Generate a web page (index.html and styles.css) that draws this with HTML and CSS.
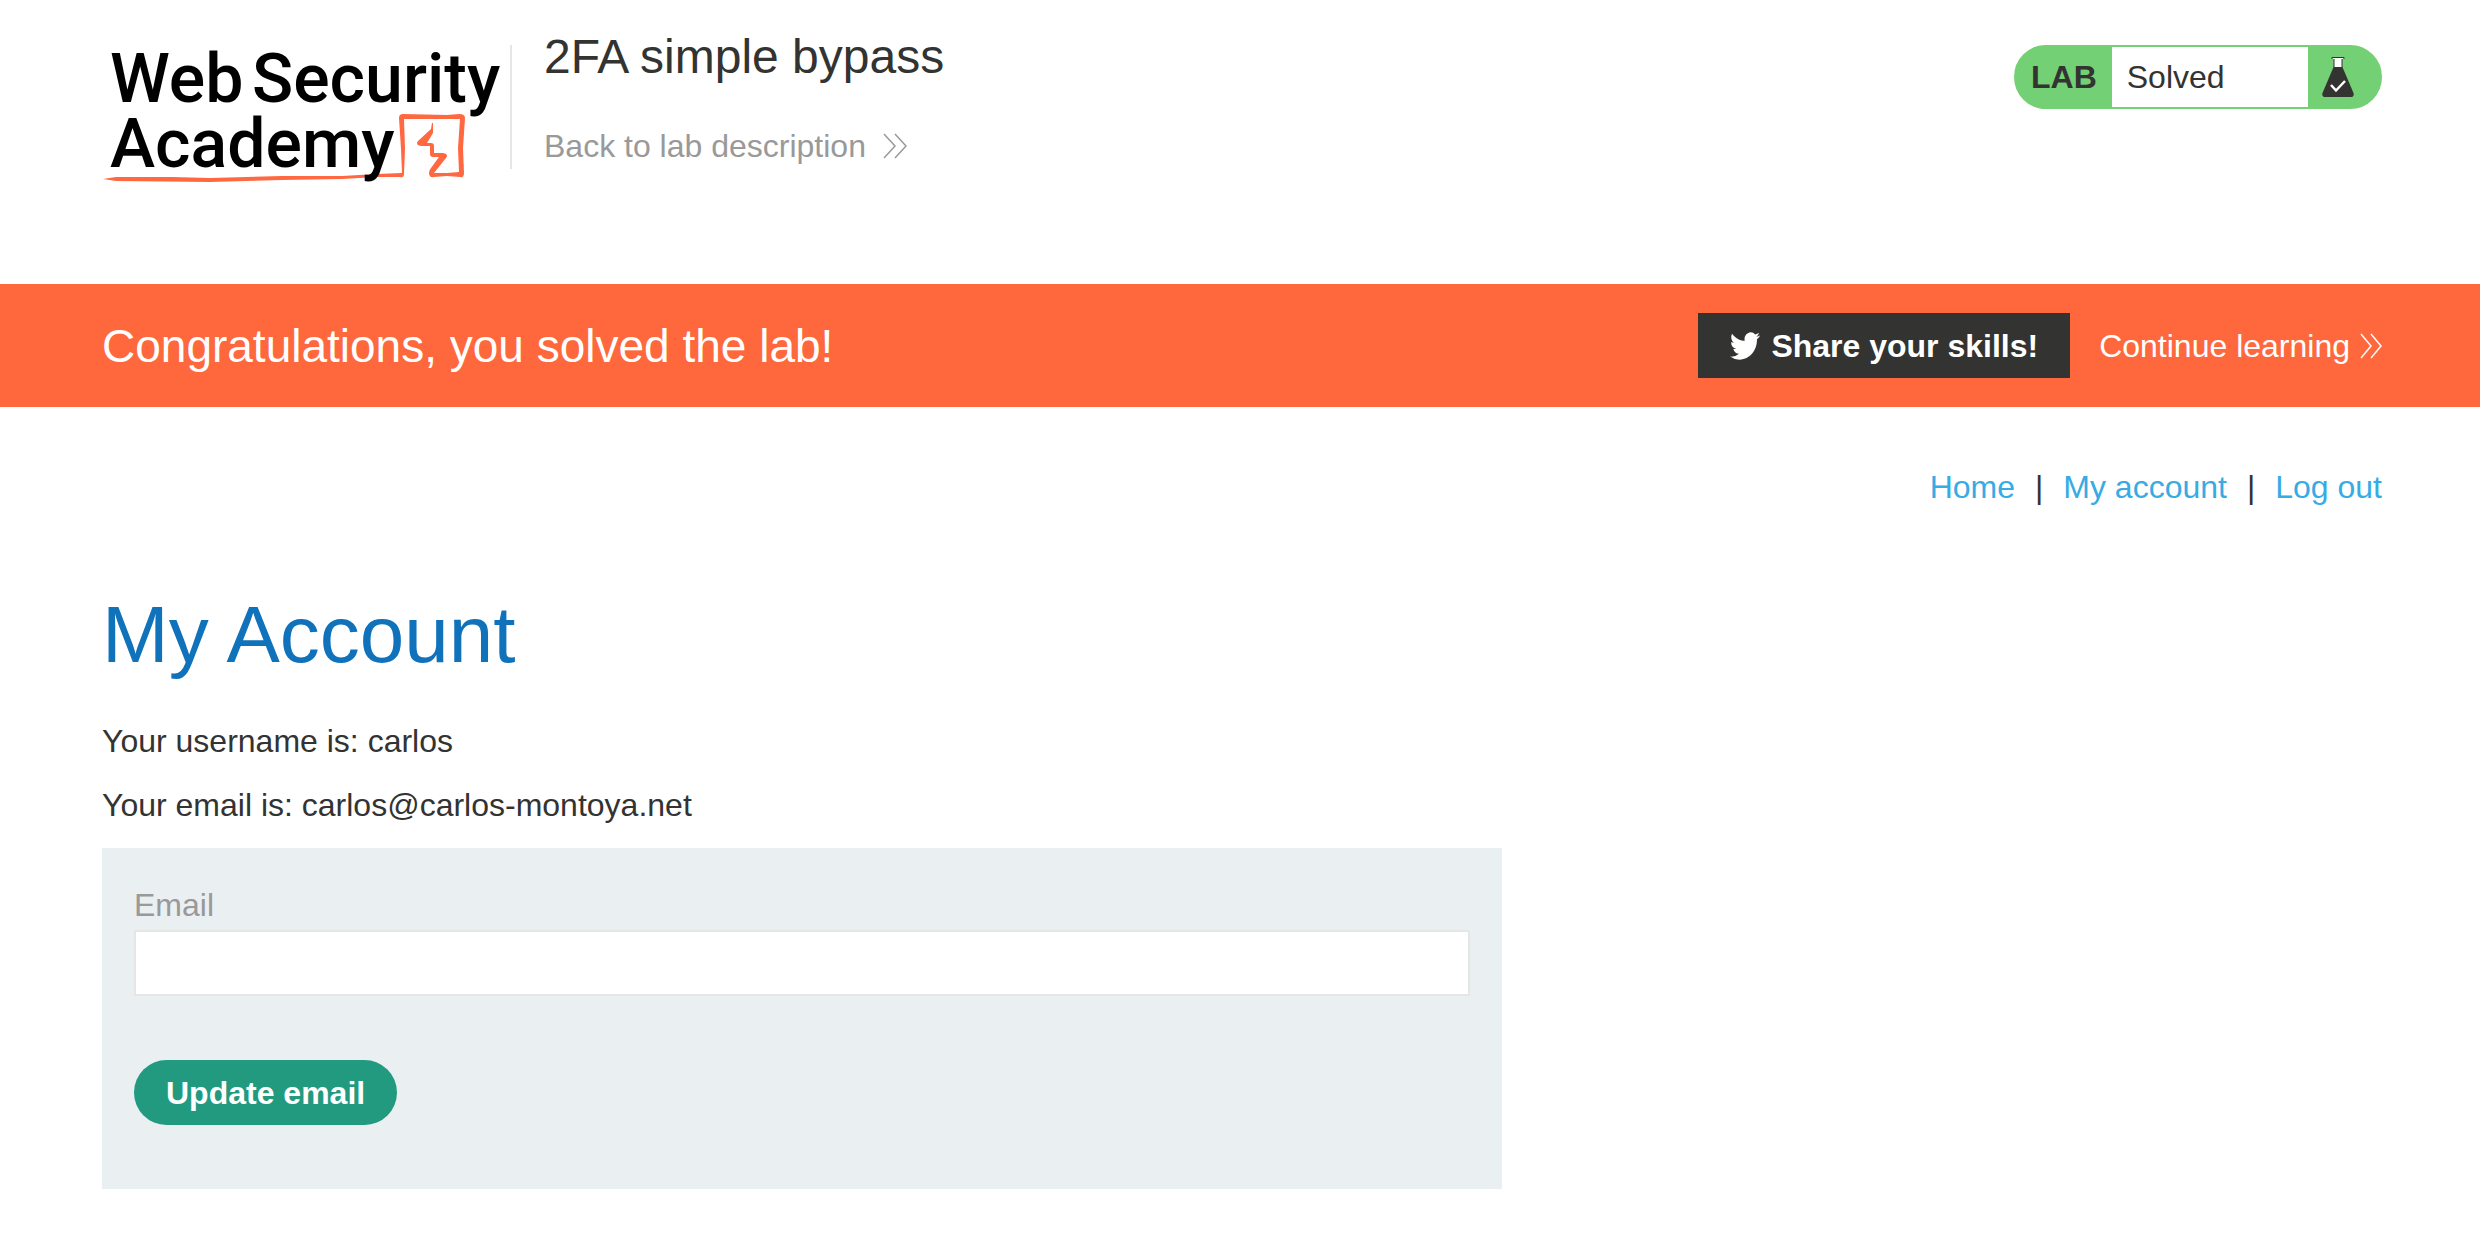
FILE: index.html
```html
<!DOCTYPE html>
<html lang="en">
<head>
<meta charset="utf-8">
<meta name="viewport" content="width=device-width, initial-scale=1">
<title>2FA simple bypass</title>
<link rel="stylesheet" href="styles.css">
</head>
<body>
<header class="lab-header container">
  <a class="logo" href="#" aria-label="Web Security Academy">
    <svg width="400" height="144" viewBox="0 0 400 144">
      <path d="M1 134 L14 132 L70 132 L108 133 L180 131 L240 131 L275 129 L300 128 L299 104 L297 73 Q297 69 301 69 L345 70 L357 69 Q363 69 363 73 L361 103 L362 128 Q362 133 358 132 L345 131 L332 132 Q327 133 327 128 Q327 125 329 123 L337 112 L331 112 Q328 112 328 109 L328 101 L319 101 Q313 100 316 96 L329 84 L330 78 L331 78 L331 88 L325 98 L329 98 Q332 98 332 101 L332 108 L341 108 Q347 109 344 113 L332 128 L345 128 L357 127 L356 103 L358 74 L345 74 L302 74 L303 104 L302 129 Q302 133 298 132 L275 132 L240 134 L180 135 L108 137 L14 136 Z" fill="#ff6840"/>
      <g class="logo-text">
        <text x="8" y="57">Web</text>
        <text x="150" y="57">Security</text>
        <text x="8" y="122">Academy</text>
      </g>
    </svg>
  </a>
  <div class="title">
    <h2>2FA simple bypass</h2>
    <a class="back-link" href="#">Back to lab description
      <svg width="24" height="26" viewBox="0 0 24 26"><path d="M1 1 L12 13 L1 25 M12 1 L23 13 L12 25"/></svg>
    </a>
  </div>
  <div class="status">
    <span class="status-label">LAB</span>
    <span class="status-value">Solved</span>
    <svg class="flask" width="32" height="42" viewBox="0 0 32 42">
      <path d="M12 10 H20 L31.500 37 Q32.500 41 28.500 41 H3.500 Q-.5 41 .5 37 Z" fill="#333332"/>
      <path d="M10.500 1.500 H21.500 V3 H20 V11 H12 V3 H10.500 Z" fill="#fff"/>
      <path d="M10 3 V1.500 H22 V3 M20 3 V11 M12 3 V11" fill="none" stroke="#333332"/>
      <path d="M9 29 L14 34.500 L23 25" fill="none" stroke="#fff" stroke-width="2.500"/>
    </svg>
  </div>
</header>

<section class="banner">
  <div class="container banner-row">
    <p class="congrats">Congratulations, you solved the lab!</p>
    <button class="share" type="button">
      <svg width="30" height="28" viewBox="0 2 24 20" preserveAspectRatio="none"><path fill="#fff" d="M23.954 4.569a10 10 0 0 1-2.825.775 4.958 4.958 0 0 0 2.163-2.723 9.990 9.990 0 0 1-3.127 1.184 4.920 4.920 0 0 0-8.384 4.482C7.691 8.094 4.066 6.130 1.640 3.161a4.822 4.822 0 0 0-.666 2.475c0 1.710.870 3.213 2.188 4.096a4.904 4.904 0 0 1-2.228-.616v.061a4.923 4.923 0 0 0 3.946 4.827 4.996 4.996 0 0 1-2.212.085 4.937 4.937 0 0 0 4.604 3.417 9.868 9.868 0 0 1-6.102 2.105c-.390 0-.779-.023-1.170-.067a13.995 13.995 0 0 0 7.557 2.209c9.054 0 13.999-7.496 13.999-13.986 0-.209 0-.420-.015-.630a9.936 9.936 0 0 0 2.460-2.548z"/></svg>
      Share your skills!
    </button>
    <a class="continue" href="#">Continue learning
      <svg width="22" height="26" viewBox="0 0 22 26"><path d="M1 1 L11 13 L1 25 M11 1 L21 13 L11 25"/></svg>
    </a>
  </div>
</section>

<main class="container">
  <nav class="nav">
    <a href="#">Home</a><span>|</span><a href="#">My account</a><span>|</span><a href="#">Log out</a>
  </nav>
  <h1>My Account</h1>
  <div class="details">
    <p>Your username is: carlos</p>
    <p>Your email is: carlos@carlos-montoya.net</p>
  </div>
  <form class="email-form">
    <label for="email">Email</label>
    <input id="email" type="email" name="email">
    <button class="update" type="submit">Update email</button>
  </form>
</main>
</body>
</html>
```
FILE: styles.css
```css
* {
  box-sizing: border-box;
}

body {
  margin: 0;
  background: #fff;
  color: #333332;
  font: 32px/48px "Liberation Sans", Arial, sans-serif;
}

h1,
h2,
p {
  margin: 0;
  font-weight: normal;
}

a {
  color: inherit;
  text-decoration: none;
}

button,
input {
  font: inherit;
}

svg {
  display: block;
  flex: none;
}

.container {
  padding: 0 98px 0 102px;
}

.lab-header {
  display: flex;
  align-items: flex-start;
  padding-top: 28px;
  padding-bottom: 95px;
}

.logo {
  margin: 17px 8px 0 0;
}

.logo-text {
  fill: #000;
  font-family: Roboto, sans-serif;
  font-size: 68px;
  font-weight: 500;
}

.title {
  flex: 1;
  position: relative;
  padding-left: 34px;
}

.title::before {
  content: "";
  position: absolute;
  left: 0;
  top: 17px;
  width: 2px;
  height: 124px;
  background: #e6e6e6;
}

.title h2 {
  margin-bottom: 36px;
  font-size: 48px;
  line-height: 58px;
}

.back-link,
.continue {
  display: inline-flex;
  align-items: center;
}

.back-link {
  gap: 17px;
  color: #999;
}

.back-link path,
.continue path {
  fill: none;
  stroke: currentColor;
  stroke-width: 1.5;
}

.status {
  display: flex;
  align-items: center;
  width: 368px;
  height: 64px;
  margin-top: 17px;
  border: 2px solid #74d074;
  border-radius: 32px;
  background: #74d074;
  line-height: 60px;
}

.status-label {
  padding: 0 15px;
  font-weight: bold;
}

.status-value {
  flex: 1;
  padding-left: 15px;
  background: #fff;
}

.flask {
  margin: 0 26px 0 14px;
}

.banner {
  padding: 29px 0;
  background: #ff683d;
  color: #fff;
}

.banner-row {
  display: flex;
  align-items: center;
}

.congrats {
  flex: 1;
  font-size: 46px;
}

.share {
  display: flex;
  align-items: center;
  gap: 11px;
  height: 65px;
  margin-right: 29px;
  padding: 0 32px;
  border: 0;
  background: #333332;
  color: #fff;
  font-weight: bold;
}

.continue {
  gap: 10px;
}

.nav {
  display: flex;
  justify-content: flex-end;
  gap: 20px;
  padding: 56px 0 76px;
}

.nav a {
  color: #37abe3;
}

h1 {
  margin-bottom: 38px;
  color: #1072ba;
  font-size: 80px;
  line-height: 96px;
}

.details {
  display: grid;
  gap: 24px;
  margin-bottom: 23px;
  line-height: 40px;
}

.email-form {
  max-width: 1400px;
  padding: 32px 32px 64px;
  background: #eaeff2;
}

.email-form label {
  display: block;
  color: #999;
  line-height: 50px;
}

.email-form input {
  display: block;
  width: 100%;
  height: 66px;
  margin-bottom: 64px;
  padding: 0 12px;
  border: 2px solid #e6e6e6;
  background: #fff;
}

.update {
  display: block;
  height: 65px;
  padding: 0 32px;
  border: 0;
  border-radius: 33px;
  background: #229a80;
  color: #fff;
  font-weight: bold;
}
```
